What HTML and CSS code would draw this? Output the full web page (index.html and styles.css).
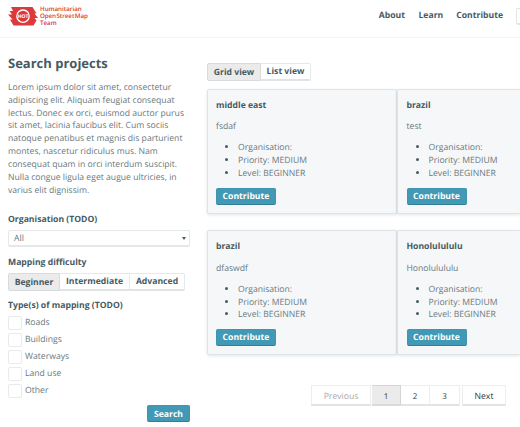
FILE: index.html
```html
<!DOCTYPE html>
<html lang="en">
<head>
<meta charset="utf-8">
<title>Search projects</title>
<link rel="stylesheet" href="styles.css">
</head>
<body>
<header class="header">
  <a class="brand">
    <svg class="mark" viewBox="0 0 30 20" width="30" height="20">
      <path fill="#dc3a3a" d="M3 1h21.500l4 6.500h-2l3.500 4.500h-3.500l2 2.500-3 5H5.500l-3.500-6h2.500L0 8.500h4L1.500 5H5z"/>
      <circle cx="15" cy="10.200" r="6.200" fill="#dc3a3a" stroke="#fff" stroke-width="1.300"/>
      <text x="15" y="12.100" text-anchor="middle" class="mark-text">HOT</text>
    </svg>
    <span class="brand-name"><span>Humanitarian</span><span class="brand-tight">Open Street Map</span><span>Team</span></span>
  </a>
  <nav class="nav"><a>About</a><a>Learn</a><a>Contribute</a><span class="nav-box"></span></nav>
</header>
<main class="main">
  <aside class="sidebar">
    <h1>Search projects</h1>
    <p class="intro">Lorem ipsum dolor sit amet, consectetur<br>adipiscing elit. Aliquam feugiat consequat<br>lectus. Donec ex orci, euismod auctor purus<br>sit amet, lacinia faucibus elit. Cum sociis<br>natoque penatibus et magnis dis parturient<br>montes, nascetur ridiculus mus. Nam<br>consequat quam in orci interdum suscipit.<br>Nulla congue ligula eget augue ultricies, in<br>varius elit dignissim.</p>
    <h2 class="label">Organisation (TODO)</h2>
    <div class="select"><span>All</span><i class="arrow"></i></div>
    <h2 class="label label-difficulty">Mapping difficulty</h2>
    <div class="group levels"><button class="active">Beginner</button><button>Intermediate</button><button>Advanced</button></div>
    <h2 class="label label-types">Type(s) of mapping (TODO)</h2>
    <ul class="checks">
      <li><i></i>Roads</li>
      <li><i></i>Buildings</li>
      <li><i></i>Waterways</li>
      <li><i></i>Land use</li>
      <li><i></i>Other</li>
    </ul>
    <button class="primary search">Search</button>
  </aside>
  <section class="results">
    <div class="group views"><button class="active">Grid view</button><button>List view</button></div>
    <div class="cards">
      <article class="card"><h3>middle east</h3><p>fsdaf</p><ul><li>Organisation:</li><li>Priority: MEDIUM</li><li>Level: BEGINNER</li></ul><button class="primary">Contribute</button></article>
      <article class="card card-cut"><h3>brazil</h3><p>test</p><ul><li>Organisation:</li><li>Priority: MEDIUM</li><li>Level: BEGINNER</li></ul><button class="primary">Contribute</button></article>
      <article class="card"><h3>brazil</h3><p>dfaswdf</p><ul><li>Organisation:</li><li>Priority: MEDIUM</li><li>Level: BEGINNER</li></ul><button class="primary">Contribute</button></article>
      <article class="card card-cut"><h3>Honolulululu</h3><p>Honolulululu</p><ul><li>Organisation:</li><li>Priority: MEDIUM</li><li>Level: BEGINNER</li></ul><button class="primary">Contribute</button></article>
    </div>
    <nav class="pages"><a class="prev">Previous</a><span class="numbers"><a class="current">1</a><a>2</a><a class="three">3</a></span><a class="next">Next</a></nav>
  </section>
</main>
</body>
</html>
```
FILE: styles.css
```css
* { box-sizing: border-box; }
body {
  margin: 0;
  width: 520px;
  height: 427px;
  overflow: hidden;
  background: #fff;
  color: #68797d;
  font: 8.650px/12.83px "Open Sans", sans-serif;
  text-rendering: geometricPrecision;
}
h1, h2, h3, p, ul { margin: 0; padding: 0; }
button { font: inherit; margin: 0; padding: 0; white-space: nowrap; text-rendering: inherit; }
.header {
  display: flex;
  justify-content: space-between;
  height: 38px;
  border-bottom: 1px solid #f3f4f4;
}
.brand { display: flex; padding: 6px 0 0 8px; }
.mark { display: block; }
.mark-text { font: bold 5px "Open Sans", sans-serif; fill: #fff; }
.brand-name {
  display: flex;
  flex-direction: column;
  margin: 0 0 0 2px;
  color: #dc3a3a;
  font-size: 6.2px;
  font-weight: 600;
  line-height: 6.9px;
  white-space: nowrap;
}
.brand-tight { letter-spacing: -.06px; word-spacing: -1px; }
.nav {
  display: flex;
  gap: 13px;
  padding-top: 9px;
  color: #465a61;
  font-weight: 700;
}
.nav a:first-child { margin-right: .5px; }
.nav-box {
  width: 4px;
  height: 17px;
  margin-top: -1px;
  border: 1px solid #dfe4e4;
  border-right: 0;
  border-bottom-width: 2px;
  border-radius: 2px 0 0 2px;
}
.main { display: flex; }
.sidebar { width: 182px; margin-left: 8px; padding-top: 16px; }
h1 { color: #465a61; font-size: 13px; line-height: 18px; white-space: nowrap; }
.intro { margin-top: 9px; white-space: nowrap; }
.label {
  margin-top: 17px;
  color: #465a61;
  font-size: inherit;
  line-height: 13px;
}
.select {
  display: flex;
  justify-content: space-between;
  align-items: center;
  height: 17px;
  margin-top: 4px;
  padding: 0 3px 0 5px;
  border: 1px solid #e3e9e9;
  border-bottom-width: 2px;
  border-radius: 2px;
}
.arrow { border: 2px solid transparent; border-top: 3px solid #465a61; border-bottom: 0; }
.label-difficulty { margin-top: 9px; }
.group { display: flex; }
.group button {
  height: 18px;
  border: 1px solid #e5e9ea;
  border-left-width: 0;
  border-bottom: 2px solid #e0e4e5;
  background: #fff;
  color: #465a61;
  font-weight: 700;
}
.group button.active { border-left-width: 1px; border-color: #d8dbdc; border-bottom-width: 1px; border-radius: 2px 0 0 2px; background: #ebebeb; }
.group button:last-child { border-radius: 0 2px 2px 0; }
.levels { margin-top: 3.500px; }
.levels button:nth-child(1) { width: 52px; }
.levels button:nth-child(2) { width: 70px; }
.levels button:nth-child(3) { width: 55px; }
.label-types { margin-top: 8.500px; }
.checks { margin-top: 1.500px; list-style: none; }
.checks li { display: flex; align-items: center; height: 17.1px; }
.checks i {
  width: 14px;
  height: 14px;
  margin-right: 3px;
  border: 1px solid #e8ebeb;
  border-radius: 2px;
}
.primary {
  display: block;
  width: 60px;
  height: 17px;
  border: 1px solid #3f95b1;
  border-bottom-color: #347f98;
  border-radius: 2px;
  background: #4199b5;
  color: #fff;
  font-weight: 700;
}
.search { width: 43px; margin: 6px 0 0 auto; }
.results { width: 313px; margin-left: 17px; padding-top: 25px; }
.views button:nth-child(1) { width: 54px; }
.views button:nth-child(2) { width: 50px; }
.cards { display: grid; grid-template-columns: 190px 123px; row-gap: 16.500px; margin-top: 7.500px; }
.card {
  height: 125px;
  padding: 9px 8px 0;
  border: 1px solid #dfe4e6;
  border-radius: 2px;
  background: #f6f7f9;
  box-shadow: 0 1px 3px rgba(70, 90, 97, .16);
}
.card-cut { border-right: 0; border-radius: 2px 0 0 2px; padding-left: 8.500px; }
.card h3 { color: #465a61; font-size: inherit; line-height: 13px; }
.card p { margin-top: 8.500px; }
.card ul { margin: 8.500px 0 8px; padding-left: 22px; }
.card li::marker { color: #465a61; }
.pages { display: flex; margin: 30px 0 0 104px; color: #333; text-align: center; line-height: 20px; }
.pages a { height: 21px; border: 1px solid #eceded; border-bottom: 2px solid #e1e3e4; }
.prev { width: 60px; color: #aaa; }
.numbers { display: flex; margin: 0 2px 0 1px; font-size: 8px; line-height: 21px; }
.numbers a { width: 29px; border-left-width: 0; }
.numbers .current { border-color: #d2d6d7; border-bottom-color: #d9dcdd; background: #ebebeb; }
.numbers .three { width: 30px; }
.next { width: 44px; }
```
